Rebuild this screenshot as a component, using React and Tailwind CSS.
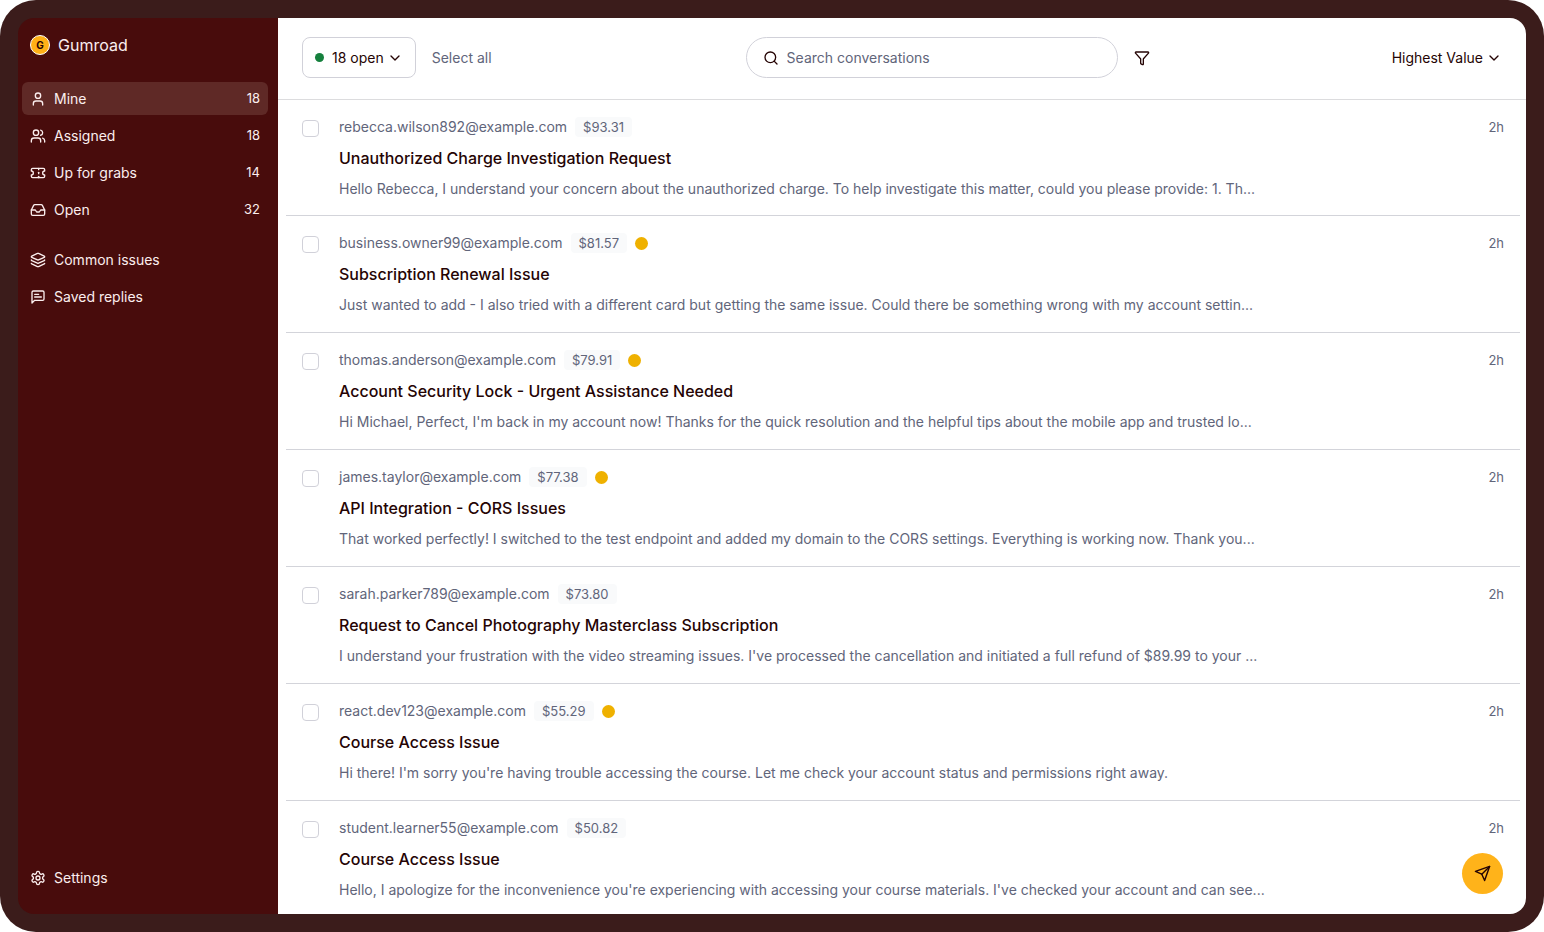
import { User, Users, Ticket, Inbox, Layers, ChevronDown, Search, Funnel } from "lucide-react";

function LineIcon({ className, children }) {
  return (
    <svg
      className={className}
      viewBox="0 0 24 24"
      fill="none"
      stroke="currentColor"
      strokeWidth="2"
      strokeLinecap="round"
      strokeLinejoin="round"
      aria-hidden="true"
    >
      {children}
    </svg>
  );
}

function RepliesIcon({ className }) {
  return (
    <LineIcon className={className}>
      <path d="M21 15a2 2 0 0 1-2 2H7l-4 4V5a2 2 0 0 1 2-2h14a2 2 0 0 1 2 2z" />
      <path d="M13 8H7" />
      <path d="M17 12H7" />
    </LineIcon>
  );
}

function CogIcon({ className }) {
  return (
    <LineIcon className={className}>
      <path d="M12.22 2h-.44a2 2 0 0 0-2 2v.18a2 2 0 0 1-1 1.73l-.43.25a2 2 0 0 1-2 0l-.15-.08a2 2 0 0 0-2.73.73l-.22.38a2 2 0 0 0 .73 2.73l.15.1a2 2 0 0 1 1 1.72v.51a2 2 0 0 1-1 1.74l-.15.09a2 2 0 0 0-.73 2.73l.22.38a2 2 0 0 0 2.73.73l.15-.08a2 2 0 0 1 2 0l.43.25a2 2 0 0 1 1 1.73V20a2 2 0 0 0 2 2h.44a2 2 0 0 0 2-2v-.18a2 2 0 0 1 1-1.73l.43-.25a2 2 0 0 1 2 0l.15.08a2 2 0 0 0 2.73-.73l.22-.39a2 2 0 0 0-.73-2.73l-.15-.08a2 2 0 0 1-1-1.74v-.5a2 2 0 0 1 1-1.74l.15-.09a2 2 0 0 0 .73-2.73l-.22-.38a2 2 0 0 0-2.73-.73l-.15.08a2 2 0 0 1-2 0l-.43-.25a2 2 0 0 1-1-1.73V4a2 2 0 0 0-2-2z" />
      <circle cx="12" cy="12" r="3" />
    </LineIcon>
  );
}

function SendIcon({ className }) {
  return (
    <LineIcon className={className}>
      <path d="m22 2-7 20-4-9-9-4Z" />
      <path d="M22 2 11 13" />
    </LineIcon>
  );
}

const mailboxes = [
  { label: "Mine", count: 18, icon: User, active: true },
  { label: "Assigned", count: 18, icon: Users },
  { label: "Up for grabs", count: 14, icon: Ticket },
  { label: "Open", count: 32, icon: Inbox },
];

const tools = [
  { label: "Common issues", icon: Layers },
  { label: "Saved replies", icon: RepliesIcon },
];

const conversations = [
  {
    email: "rebecca.wilson892@example.com",
    value: "$93.31",
    subject: "Unauthorized Charge Investigation Request",
    preview: "Hello Rebecca, I understand your concern about the unauthorized charge. To help investigate this matter, could you please provide: 1. Th...",
  },
  {
    email: "business.owner99@example.com",
    value: "$81.57",
    unread: true,
    subject: "Subscription Renewal Issue",
    preview: "Just wanted to add - I also tried with a different card but getting the same issue. Could there be something wrong with my account settin...",
  },
  {
    email: "thomas.anderson@example.com",
    value: "$79.91",
    unread: true,
    subject: "Account Security Lock - Urgent Assistance Needed",
    preview: "Hi Michael, Perfect, I'm back in my account now! Thanks for the quick resolution and the helpful tips about the mobile app and trusted lo...",
  },
  {
    email: "james.taylor@example.com",
    value: "$77.38",
    unread: true,
    subject: "API Integration - CORS Issues",
    preview: "That worked perfectly! I switched to the test endpoint and added my domain to the CORS settings. Everything is working now. Thank you...",
  },
  {
    email: "sarah.parker789@example.com",
    value: "$73.80",
    subject: "Request to Cancel Photography Masterclass Subscription",
    preview: "I understand your frustration with the video streaming issues. I've processed the cancellation and initiated a full refund of $89.99 to your ...",
  },
  {
    email: "react.dev123@example.com",
    value: "$55.29",
    unread: true,
    subject: "Course Access Issue",
    preview: "Hi there! I'm sorry you're having trouble accessing the course. Let me check your account status and permissions right away.",
  },
  {
    email: "student.learner55@example.com",
    value: "$50.82",
    subject: "Course Access Issue",
    preview: "Hello, I apologize for the inconvenience you're experiencing with accessing your course materials. I've checked your account and can see...",
  },
];

function NavItem({ label, count, icon: Icon, active }) {
  return (
    <a
      href="#"
      className={`flex h-[33px] items-center gap-2 rounded-md px-2 text-sm ${active ? "bg-[#5f2926]" : ""}`}
    >
      <Icon className="size-4" />
      <span className="grow">{label}</span>
      {count !== undefined && <span className="text-[13px]">{count}</span>}
    </a>
  );
}

function Sidebar() {
  return (
    <nav className="flex w-[260px] shrink-0 flex-col bg-[#480c0c] pr-[10px] pl-1 text-[#fbeeee]">
      <div className="flex h-[54px] items-center gap-2 px-2">
        <span className="flex size-5 items-center justify-center rounded-full border border-white bg-[#ffb016] text-[10px] font-bold text-[#250404]">
          G
        </span>
        <span className="text-base">Gumroad</span>
      </div>
      <div className="mt-[10px] flex flex-col gap-1">
        {mailboxes.map((item) => (
          <NavItem key={item.label} {...item} />
        ))}
      </div>
      <div className="mt-[17px] flex flex-col gap-1">
        {tools.map((item) => (
          <NavItem key={item.label} {...item} />
        ))}
      </div>
      <div className="mt-auto pb-5">
        <NavItem label="Settings" icon={CogIcon} />
      </div>
    </nav>
  );
}

function Toolbar() {
  return (
    <header className="flex h-[82px] shrink-0 items-center justify-between border-b border-[#dcdcde] px-6 pb-[2px] text-sm text-[#250404]">
      <div className="flex items-center gap-1">
        <button className="flex h-[41px] items-center gap-2 rounded-lg border border-[#d1d1d9] px-3">
          <span className="size-[9px] rounded-full bg-[#15803d]" />
          <span className="flex items-center gap-[3px]">
            18 open
            <ChevronDown className="size-4" />
          </span>
        </button>
        <button className="px-3 text-[#61657a]">Select all</button>
      </div>
      <div className="flex items-center gap-4">
        <label className="flex h-[41px] w-[372px] items-center gap-2 rounded-full border border-[#d1d1d9] px-4">
          <Search className="size-4" />
          <input
            type="text"
            aria-label="Search conversations"
            placeholder="Search conversations"
            className="min-w-0 grow outline-none placeholder:text-[#61657a]"
          />
        </label>
        <button aria-label="Filter">
          <Funnel className="size-4" />
        </button>
      </div>
      <button className="flex items-center gap-[3px]">
        Highest Value
        <ChevronDown className="size-4" />
      </button>
    </header>
  );
}

function Conversation({ email, value, unread, subject, preview }) {
  return (
    <li className="flex gap-5 border-b border-[#d3d4da] px-4 pt-4 pb-4 first:pb-[15px] last:border-b-0">
      <input
        type="checkbox"
        aria-label={subject}
        className="mt-1 size-[17px] shrink-0 appearance-none rounded border border-[#d1d1d9] bg-white"
      />
      <div className="flex min-w-0 grow flex-col gap-2">
        <div className="flex h-[22px] items-center text-sm text-[#61657a]">
          <span>{email}</span>
          <span className="ml-2 rounded bg-[#f9fafb] px-2 text-[13px] leading-5">{value}</span>
          {unread && <span className="ml-2 size-[13px] rounded-full bg-[#efb100]" />}
          <span className="ml-auto text-[13px]">2h</span>
        </div>
        <h2 className="text-base leading-6 font-medium text-[#250404]">{subject}</h2>
        <p className="truncate text-sm leading-[22px] text-[#61657a]">{preview}</p>
      </div>
    </li>
  );
}

export default function App() {
  return (
    <div className="h-screen bg-white font-['Inter',sans-serif]">
      <div className="h-full rounded-[36px] bg-[#3b1c1b] p-[18px]">
        <div className="relative flex h-full overflow-hidden rounded-2xl">
          <Sidebar />
          <main className="flex min-w-0 grow flex-col overflow-hidden bg-white">
            <Toolbar />
            <ul className="min-h-0 grow overflow-hidden pr-1.5 pl-2">
              {conversations.map((item) => (
                <Conversation key={item.email} {...item} />
              ))}
            </ul>
          </main>
          <button
            aria-label="New message"
            className="absolute right-[23px] bottom-5 flex size-[41px] items-center justify-center rounded-full bg-[#ffb31a] text-[#250404]"
          >
            <SendIcon className="size-[17px]" />
          </button>
        </div>
      </div>
    </div>
  );
}
